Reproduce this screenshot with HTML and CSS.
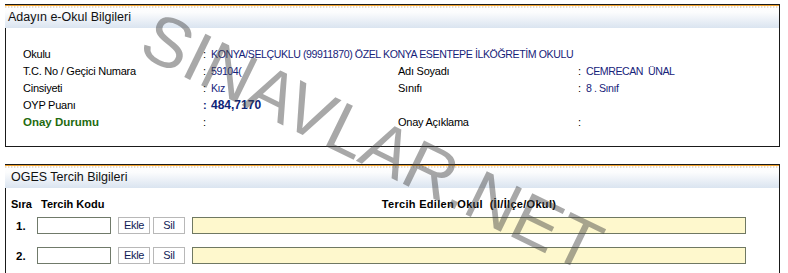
FILE: index.html
```html
<!DOCTYPE html>
<html lang="tr">
<head>
<meta charset="utf-8">
<title>Adayın e-Okul Bilgileri</title>
<link rel="stylesheet" href="styles.css">
</head>
<body>
<div class="page">
  <section class="panel panel-info">
    <div class="panel-head">Adayın e-Okul Bilgileri</div>
    <div class="info-grid">
      <div class="lbl">Okulu</div>
      <div class="val span3 school-name"><span class="colon">:</span>KONYA/SELÇUKLU (99911870) ÖZEL KONYA ESENTEPE İLKÖĞRETİM OKULU</div>

      <div class="lbl">T.C. No / Geçici Numara</div>
      <div class="val"><span class="colon">:</span>59104(</div>
      <div class="lbl">Adı Soyadı</div>
      <div class="val"><span class="colon">:</span>CEMRECAN&nbsp; ÜNAL</div>

      <div class="lbl">Cinsiyeti</div>
      <div class="val"><span class="colon">:</span>Kız</div>
      <div class="lbl">Sınıfı</div>
      <div class="val"><span class="colon">:</span>8 . Sınıf</div>

      <div class="lbl">OYP Puanı</div>
      <div class="val score"><span class="colon">:</span>484,7170</div>
      <div class="lbl"></div>
      <div class="val"></div>

      <div class="lbl status">Onay Durumu</div>
      <div class="val"><span class="colon">:</span></div>
      <div class="lbl">Onay Açıklama</div>
      <div class="val"><span class="colon">:</span></div>
    </div>
  </section>

  <section class="panel panel-pref">
    <div class="panel-head head2">OGES Tercih Bilgileri</div>
    <div class="pref-body">
      <div class="pref-head">
        <span class="h-sira">Sıra</span>
        <span class="h-kod">Tercih Kodu</span>
        <span class="h-okul">Tercih Edilen Okul&nbsp; (İl/İlçe/Okul)</span>
      </div>
      <div class="pref-row">
        <span class="num">1.</span>
        <input class="code" type="text">
        <button class="btn btn-ekle" type="button">Ekle</button>
        <button class="btn btn-sil" type="button">Sil</button>
        <input class="school" type="text" readonly>
      </div>
      <div class="pref-row">
        <span class="num">2.</span>
        <input class="code" type="text">
        <button class="btn btn-ekle" type="button">Ekle</button>
        <button class="btn btn-sil" type="button">Sil</button>
        <input class="school" type="text" readonly>
      </div>
    </div>
  </section>

  <div class="watermark">SINAVLAR.NET</div>
</div>
</body>
</html>
```
FILE: styles.css
```css
html, body {
  margin: 0;
  padding: 0;
  background: #fff;
}
body {
  font-family: "Liberation Sans", Arial, sans-serif;
  font-size: 11px;
  color: #000;
  overflow: hidden;
}
.page {
  position: relative;
  padding: 4px 0 0 5px;
  width: 788px;
  height: 273px;
  box-sizing: border-box;
  overflow: hidden;
}
.panel {
  width: 775px;
  box-sizing: border-box;
  border: 1px solid #1a1a1a;
  background: #fff;
}
.panel-pref {
  margin-top: 17px;
  border-bottom: none;
  height: 120px;
}
.panel-head {
  height: 22px;
  border-top: 1px solid #f0a02a;
  margin-left: -1px;
  padding-left: 3px;
  font-size: 12.5px;
  line-height: 22px;
  color: #111;
  background:
    repeating-linear-gradient(90deg, #e9dccb 0 1px, #f6f1ea 1px 2px, #fff 2px 3px) top left / 100% 2px no-repeat,
    linear-gradient(to bottom, #ffffff 0%, #fbfcfd 30%, #dae4f0 100%);
}
.head2 {
  padding-left: 6px;
}
.info-grid {
  display: grid;
  grid-template-columns: 180px 195px 180px 1fr;
  grid-auto-rows: 17px;
  align-items: center;
  padding: 17px 0 16px 17px;
  letter-spacing: -0.25px;
}
.span3 {
  grid-column: span 3;
}
.val {
  color: #16237a;
  white-space: nowrap;
  font-size: 10.6px;
  letter-spacing: -0.45px;
}
.school-name {
  letter-spacing: -0.41px;
}
.colon {
  display: inline-block;
  width: 8px;
  color: #000;
  font-size: 11px;
}
.score {
  font-weight: bold;
  font-size: 12px;
  color: #0d2477;
  letter-spacing: 0;
}
.score .colon {
  font-weight: bold;
  color: #0d2477;
}
.status {
  font-weight: bold;
  color: #1f6b0f;
  font-size: 11.5px;
  letter-spacing: 0;
}
.pref-body {
  padding: 7px 0 0 0;
}
.pref-head {
  display: flex;
  height: 17px;
  align-items: center;
  font-weight: bold;
  font-size: 11px;
}
.h-sira {
  width: 31px;
  padding-left: 5px;
  box-sizing: border-box;
}
.h-kod {
  width: 155px;
  padding-left: 4px;
  box-sizing: border-box;
}
.h-okul {
  width: 554px;
  text-align: center;
  letter-spacing: 0.3px;
}
.pref-row {
  display: flex;
  align-items: center;
  height: 17px;
  margin-top: 5px;
}
.pref-row + .pref-row {
  margin-top: 13px;
}
.num {
  width: 31px;
  padding-left: 10px;
  box-sizing: border-box;
  font-weight: bold;
  font-size: 11.5px;
}
.code {
  width: 74px;
  height: 17px;
  box-sizing: border-box;
  border: 1px solid #707a6a;
  padding: 0;
  margin: 0;
  background: #fff;
}
.btn {
  width: 32px;
  height: 17px;
  box-sizing: border-box;
  padding: 0;
  margin: 0 0 0 7px;
  border: 1px solid #b8b8b8;
  background: #fff;
  font-family: "Liberation Sans", Arial, sans-serif;
  font-size: 11px;
  letter-spacing: -0.3px;
  color: #101a55;
  line-height: 15px;
}
.btn-sil {
  margin-left: 3px;
}
.school {
  width: 554px;
  height: 17px;
  box-sizing: border-box;
  margin: 0 0 0 7px;
  padding: 0;
  border: 1px solid #6f7862;
  background: #fef8cd;
}
.watermark {
  position: absolute;
  left: 372px;
  top: 142px;
  transform: translate(-50%, -50%) rotate(26deg);
  font-family: "Liberation Sans", Arial, sans-serif;
  font-size: 70px;
  line-height: 1;
  color: rgba(70, 70, 70, 0.47);
  white-space: nowrap;
  pointer-events: none;
}
```
